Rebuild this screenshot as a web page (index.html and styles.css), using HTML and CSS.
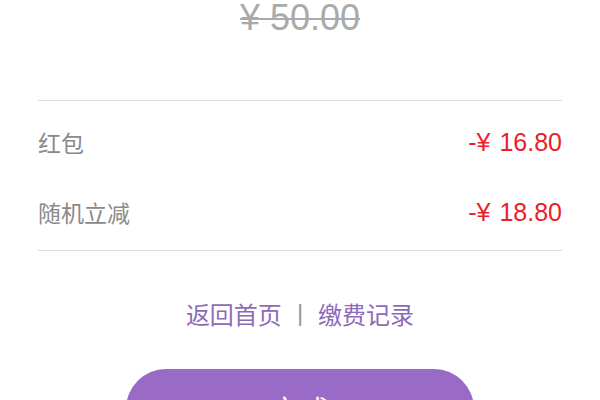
FILE: index.html
```html
<!DOCTYPE html>
<html lang="zh">
<head>
<meta charset="utf-8">
<link rel="stylesheet" href="styles.css">
</head>
<body>
<div class="page">
  <div class="price">¥ 50.00</div>
  <div class="list">
    <div class="row"><span class="label">红包</span><span class="value">-¥ 16.80</span></div>
    <div class="row"><span class="label">随机立减</span><span class="value">-¥ 18.80</span></div>
  </div>
  <div class="links"><span class="link">返回首页</span><span class="sep">|</span><span class="link">缴费记录</span></div>
  <div class="btn-wrap"><div class="btn">完成</div></div>
</div>
</body>
</html>
```
FILE: styles.css
```css
html, body { margin: 0; padding: 0; background: #fff; }
body { font-family: "Liberation Sans", "Noto Sans CJK SC", sans-serif; width: 600px; height: 400px; overflow: hidden; }
.page { padding: 0 38px; }
.price { height: 36px; line-height: 36px; font-size: 36px; color: #aaa; text-align: center; text-decoration: line-through; text-decoration-thickness: 2px; margin-bottom: 64px; }
.list { border-top: 1px solid #ddd; border-bottom: 1px solid #ddd; padding: 6px 0 3px; }
.row { height: 70px; display: flex; align-items: center; justify-content: space-between; }
.label { font-size: 23px; color: #8a8a8a; }
.value { font-size: 25px; color: #e8212b; word-spacing: 2px; }
.links { height: 60px; margin-top: 32px; display: flex; align-items: center; justify-content: center; font-size: 24px; color: #8c6bb8; }
.sep { margin: 0 15px; color: #999; }
.btn-wrap { display: flex; justify-content: center; margin-top: 26px; }
.btn { width: 348px; height: 80px; border-radius: 40px; background: #9a6bc6; color: #fff; font-size: 30px; display: flex; align-items: center; justify-content: center; }
```
